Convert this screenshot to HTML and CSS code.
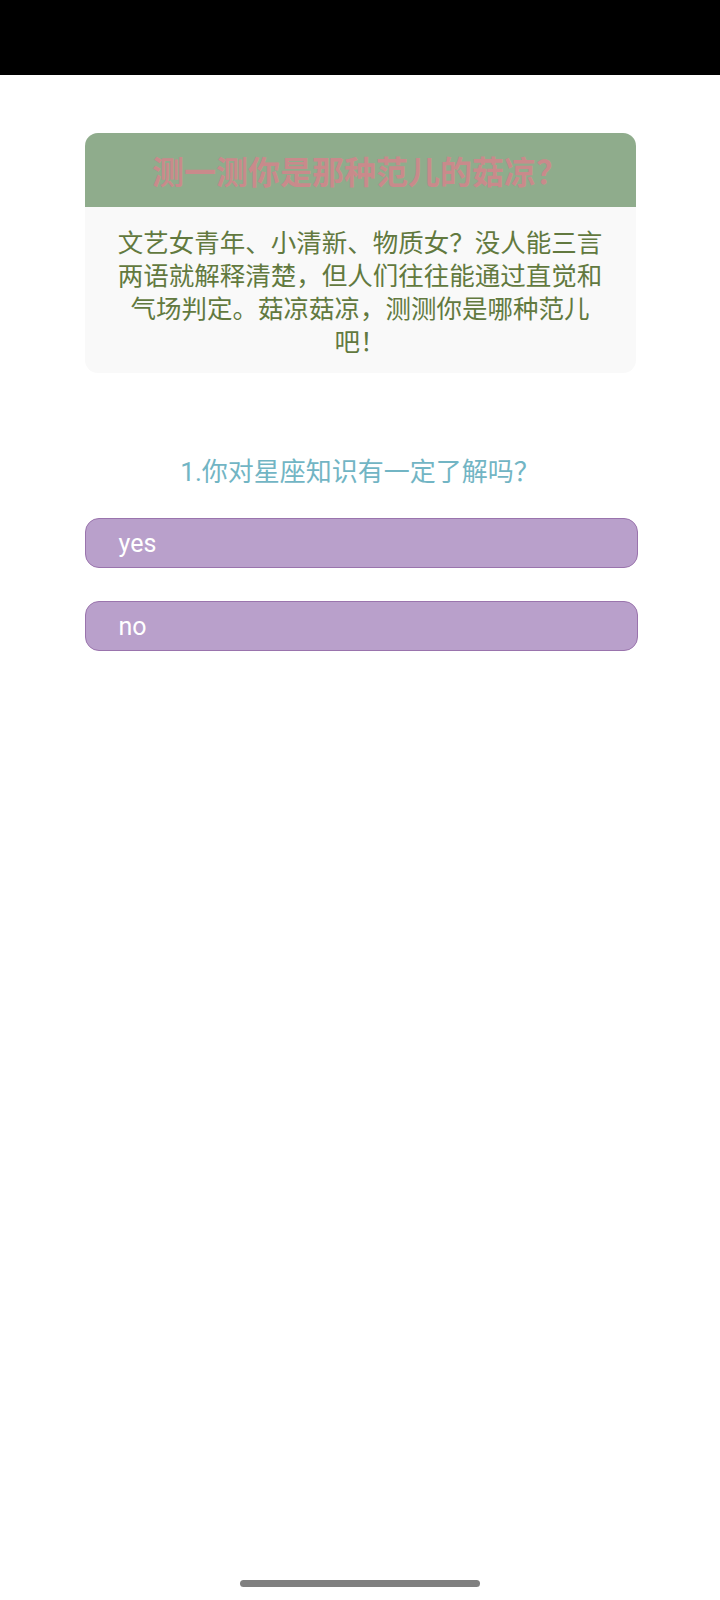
FILE: index.html
```html
<!DOCTYPE html>
<html lang="zh-CN">
<head>
    <meta charset="UTF-8">
    <meta name="viewport" content="width=device-width, initial-scale=1.0">
    <title>测一测你是那种范儿的菇凉？</title>
    <link rel="stylesheet" href="styles.css">
</head>
<body>
    <div class="status-bar"></div>
    <main class="quiz">
        <section class="intro-card">
            <h1 class="intro-title">测一测你是那种范儿的菇凉？</h1>
            <p class="intro-text">文艺女青年、小清新、物质女？没人能三言两语就解释清楚，但人们往往能通过直觉和气场判定。菇凉菇凉，测测你是哪种范儿吧！</p>
        </section>

        <h2 class="question">1.你对星座知识有一定了解吗？</h2>

        <div class="answers">
            <button class="answer">yes</button>
            <button class="answer">no</button>
        </div>
    </main>
    <div class="nav-bar">
        <span class="nav-handle"></span>
    </div>
</body>
</html>
```

FILE: styles.css
```css
/* General */
body {
    margin: 0;
    padding: 0;
    min-height: 1600px;
    display: flex;
    flex-direction: column;
    background-color: #ffffff;
    font-family: Roboto, "Noto Sans CJK SC", sans-serif;
}

.status-bar {
    height: 75px;
    background-color: #000000;
}

/* Quiz area */
.quiz {
    width: 551px;
    margin: 58px auto 0;
}

.intro-card {
    background-color: #f9f9f9;
    border-radius: 13px;
    overflow: hidden;
}

.intro-title {
    margin: 0;
    height: 74px;
    display: flex;
    align-items: center;
    justify-content: center;
    background-color: #8fac8c; /* header green */
    color: #c98a8b;
    font-size: 32px;
    font-weight: 700;
}

.intro-text {
    margin: 0;
    padding: 20px 30px 14px;
    text-align: center;
    color: #62793f;
    font-size: 25.5px;
    line-height: 33px;
}

.question {
    margin: 85px 0 0;
    text-align: center;
    color: #72b5c4;
    font-size: 26px;
    font-weight: 400;
    line-height: 28px;
}

/* Answer buttons */
.answers {
    display: flex;
    flex-direction: column;
    gap: 33px;
    margin: 32px -2px 0 0;
}

.answer {
    height: 50px;
    padding: 0 33px;
    text-align: left;
    border: 1.5px solid #9a74ad;
    border-radius: 14px;
    background-color: #b9a0cb;
    color: #ffffff;
    font-family: Roboto, sans-serif;
    font-size: 25px;
}

/* System nav bar */
.nav-bar {
    margin-top: auto;
    height: 20px;
    display: flex;
    justify-content: center;
}

.nav-handle {
    width: 240px;
    height: 7px;
    border-radius: 4px;
    background-color: #808080;
}
```
